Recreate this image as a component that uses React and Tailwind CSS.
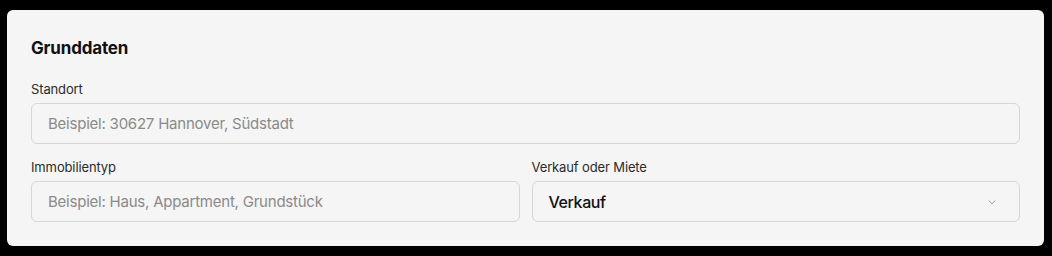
import React from "react";

const Label = ({ children }) => (
  <label className="block text-[13px] leading-5 tracking-[-0.01em] text-[#2b2b2b] mb-1">{children}</label>
);

const Field = ({ placeholder }) => (
  <input
    type="text"
    placeholder={placeholder}
    className="w-full h-[41px] rounded-md border border-[#d6d6d6] bg-[#f5f5f5] px-4 text-[15px] tracking-[-0.015em] text-[#111] placeholder:text-[#8a8a8a] outline-none"
  />
);

export default function App() {
  return (
    <div className="w-[1052px] h-[256px] bg-black pt-[10px] pl-[7px] font-['Inter',sans-serif]">
      <div className="w-[1037px] h-[236px] rounded-md bg-[#f5f5f5] px-6 pt-6">
        <h2 className="text-[17px] leading-7 font-bold tracking-[-0.01em] text-[#111]">Grunddaten</h2>
        <div className="mt-[17px]">
          <Label>Standort</Label>
          <Field placeholder="Beispiel: 30627 Hannover, Südstadt" />
        </div>
        <div className="mt-[13px] grid grid-cols-2 gap-3">
          <div>
            <Label>Immobilientyp</Label>
            <Field placeholder="Beispiel: Haus, Appartment, Grundstück" />
          </div>
          <div>
            <Label>Verkauf oder Miete</Label>
            <div className="flex items-center justify-between h-[41px] rounded-md border border-[#d6d6d6] bg-[#f5f5f5] px-4">
              <span className="text-base font-medium tracking-[-0.025em] text-[#111]">Verkauf</span>
              <svg width="14" height="14" viewBox="0 0 24 24" fill="none" stroke="#8a8a8a" strokeWidth="1.5" strokeLinecap="round" strokeLinejoin="round" className="mr-[4px]">
                <path d="m7 10 5 5 5-5" />
              </svg>
            </div>
          </div>
        </div>
      </div>
    </div>
  );
}
